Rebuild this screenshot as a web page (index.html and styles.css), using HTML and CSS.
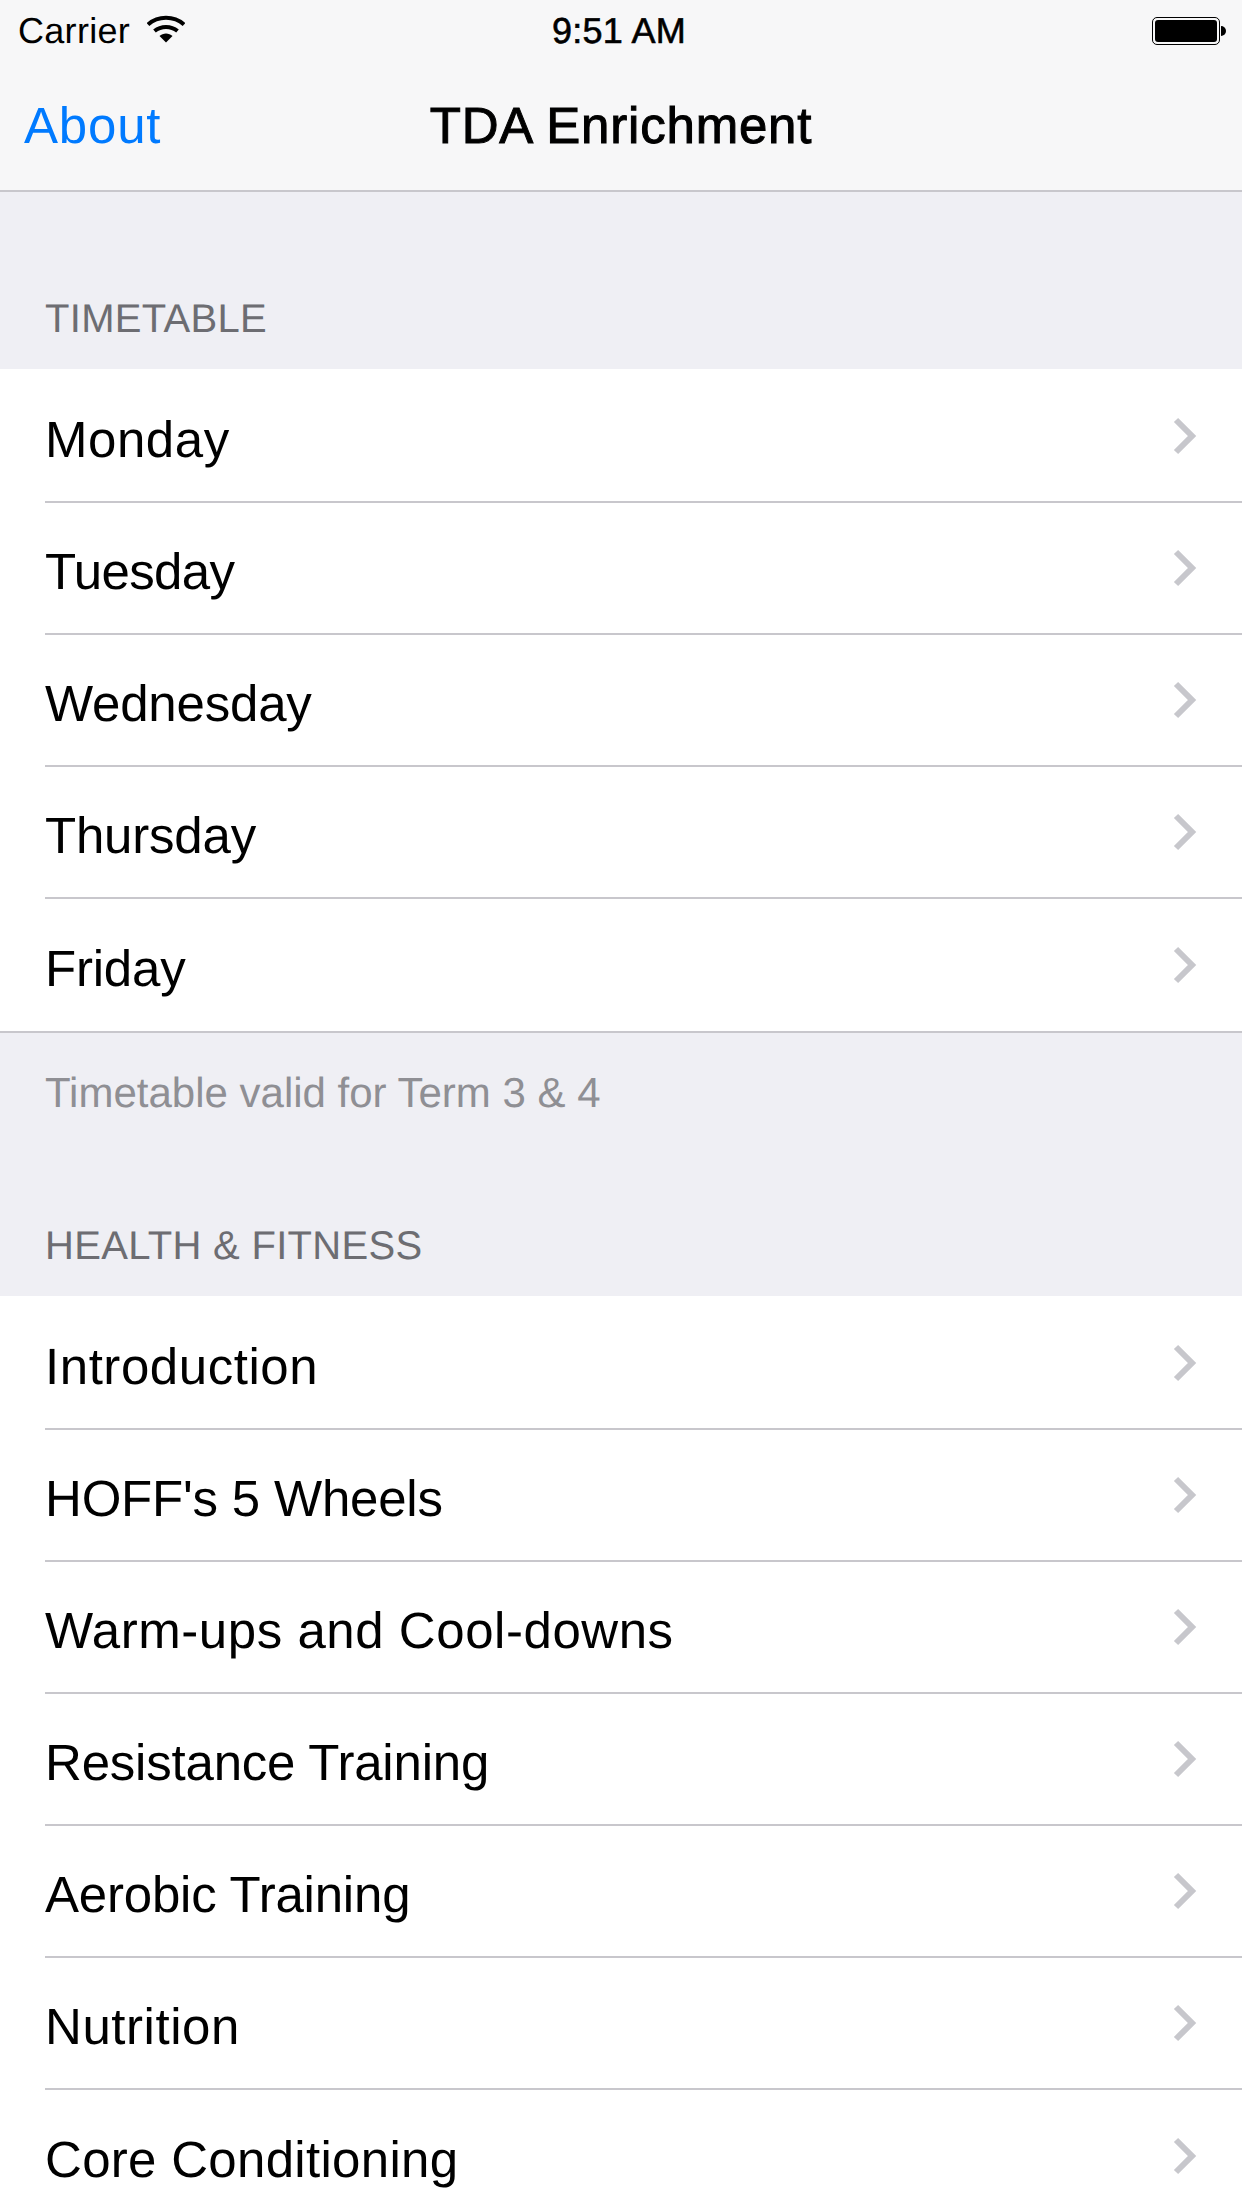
FILE: index.html
```html
<!DOCTYPE html>
<html lang="en">
<head>
    <meta charset="UTF-8">
    <meta name="viewport" content="width=device-width, initial-scale=1.0">
    <title>TDA Enrichment</title>
    <link rel="stylesheet" href="styles.css">
</head>
<body>
    <header class="top-bar">
        <div class="status-bar">
            <div class="status-left">
                <span class="carrier">Carrier</span>
                <svg class="wifi" width="38" height="28" viewBox="0 0 38 28">
                    <path d="M1 9.5C11 0.5 27 0.5 37 9.5" fill="none" stroke="#000" stroke-width="4"/>
                    <path d="M7.5 16C14 10.5 24 10.5 30.5 16" fill="none" stroke="#000" stroke-width="4"/>
                    <path d="M12.5 21C16 17.5 22 17.5 25.5 21L19 27.5Z" fill="#000"/>
                </svg>
            </div>
            <span class="clock">9:51 AM</span>
            <div class="battery">
                <div class="battery-body"><div class="battery-fill"></div></div>
                <div class="battery-tip"></div>
            </div>
        </div>
        <div class="nav-bar">
            <a class="nav-back" href="#">About</a>
            <h1 class="nav-title">TDA Enrichment</h1>
        </div>
    </header>

    <section class="group">
        <h2 class="group-title">TIMETABLE</h2>
        <ul class="rows">
            <li class="row"><span class="row-label wide">Monday</span><svg class="chevron" width="24" height="38" viewBox="0 0 24 38"><path d="M3 3L19 19L3 35" fill="none" stroke="#c7c7cc" stroke-width="6"/></svg></li>
            <li class="row"><span class="row-label tight">Tuesday</span><svg class="chevron" width="24" height="38" viewBox="0 0 24 38"><path d="M3 3L19 19L3 35" fill="none" stroke="#c7c7cc" stroke-width="6"/></svg></li>
            <li class="row"><span class="row-label">Wednesday</span><svg class="chevron" width="24" height="38" viewBox="0 0 24 38"><path d="M3 3L19 19L3 35" fill="none" stroke="#c7c7cc" stroke-width="6"/></svg></li>
            <li class="row"><span class="row-label">Thursday</span><svg class="chevron" width="24" height="38" viewBox="0 0 24 38"><path d="M3 3L19 19L3 35" fill="none" stroke="#c7c7cc" stroke-width="6"/></svg></li>
            <li class="row"><span class="row-label">Friday</span><svg class="chevron" width="24" height="38" viewBox="0 0 24 38"><path d="M3 3L19 19L3 35" fill="none" stroke="#c7c7cc" stroke-width="6"/></svg></li>
        </ul>
        <p class="group-note">Timetable valid for Term 3 &amp; 4</p>
    </section>

    <section class="group">
        <h2 class="group-title">HEALTH &amp; FITNESS</h2>
        <ul class="rows">
            <li class="row"><span class="row-label wide">Introduction</span><svg class="chevron" width="24" height="38" viewBox="0 0 24 38"><path d="M3 3L19 19L3 35" fill="none" stroke="#c7c7cc" stroke-width="6"/></svg></li>
            <li class="row"><span class="row-label">HOFF's 5 Wheels</span><svg class="chevron" width="24" height="38" viewBox="0 0 24 38"><path d="M3 3L19 19L3 35" fill="none" stroke="#c7c7cc" stroke-width="6"/></svg></li>
            <li class="row"><span class="row-label wide">Warm-ups and Cool-downs</span><svg class="chevron" width="24" height="38" viewBox="0 0 24 38"><path d="M3 3L19 19L3 35" fill="none" stroke="#c7c7cc" stroke-width="6"/></svg></li>
            <li class="row"><span class="row-label">Resistance Training</span><svg class="chevron" width="24" height="38" viewBox="0 0 24 38"><path d="M3 3L19 19L3 35" fill="none" stroke="#c7c7cc" stroke-width="6"/></svg></li>
            <li class="row"><span class="row-label">Aerobic Training</span><svg class="chevron" width="24" height="38" viewBox="0 0 24 38"><path d="M3 3L19 19L3 35" fill="none" stroke="#c7c7cc" stroke-width="6"/></svg></li>
            <li class="row"><span class="row-label wide">Nutrition</span><svg class="chevron" width="24" height="38" viewBox="0 0 24 38"><path d="M3 3L19 19L3 35" fill="none" stroke="#c7c7cc" stroke-width="6"/></svg></li>
            <li class="row"><span class="row-label semi-wide">Core Conditioning</span><svg class="chevron" width="24" height="38" viewBox="0 0 24 38"><path d="M3 3L19 19L3 35" fill="none" stroke="#c7c7cc" stroke-width="6"/></svg></li>
        </ul>
    </section>
</body>
</html>
```

FILE: styles.css
```css
html, body {
    height: 2208px;
    overflow: hidden;
}
body {
    font-family: 'Liberation Sans', Arial, sans-serif;
    background-color: #efeff4;
    color: #000;
    margin: 0;
    text-rendering: geometricPrecision;
}
.top-bar {
    background-color: #f7f7f8;
    border-bottom: 2px solid #c8c7cc;
}
.status-bar {
    display: grid;
    grid-template-columns: 1fr auto 1fr;
    align-items: center;
    height: 60px;
    padding: 2px 16px 0 18px;
    box-sizing: border-box;
}
.status-left {
    display: flex;
    align-items: center;
    gap: 17px;
}
.carrier {
    font-size: 36px;
    letter-spacing: 0.3px;
}
.wifi {
    margin-top: -5px;
}
.clock {
    font-size: 36px;
    text-align: center;
    letter-spacing: 0.3px;
    padding-right: 6px;
    -webkit-text-stroke: 0.6px #000;
}
.battery {
    display: flex;
    align-items: center;
    justify-self: end;
}
.battery-body {
    width: 68px;
    height: 28px;
    box-sizing: border-box;
    border: 1px solid #000;
    border-radius: 5px;
    padding: 2px;
}
.battery-fill {
    height: 100%;
    background-color: #000;
    border-radius: 3px;
}
.battery-tip {
    width: 5px;
    height: 10px;
    margin-left: 1px;
    background-color: #000;
    border-radius: 0 5px 5px 0;
}
.nav-bar {
    display: grid;
    grid-template-columns: 1fr auto 1fr;
    align-items: center;
    height: 130px;
    padding: 0 24px;
}
.nav-back {
    color: #007aff;
    font-size: 51px;
    letter-spacing: 0.8px;
    text-decoration: none;
}
.nav-title {
    font-size: 51px;
    font-weight: normal;
    letter-spacing: 0.8px;
    margin: 0;
    -webkit-text-stroke: 1px #000;
}
.group-title {
    font-size: 40px;
    font-weight: normal;
    color: #6d6d72;
    letter-spacing: 0.3px;
    margin: 0;
    padding: 101px 45px 23px;
    line-height: 53px;
}
.rows {
    list-style: none;
    margin: 0;
    padding: 2px 0 0 45px;
    background-color: #fff;
    border-bottom: 2px solid #c8c7cc;
}
.row {
    display: flex;
    justify-content: space-between;
    align-items: center;
    height: 130px;
    padding-right: 45px;
    border-bottom: 2px solid #c8c7cc;
    font-size: 51px;
}
.row:last-child {
    height: 132px;
    border-bottom: none;
}
.row-label {
    padding-top: 6px;
    letter-spacing: -0.2px;
}
.row-label.tight {
    letter-spacing: -0.6px;
}
.row-label.semi-wide {
    letter-spacing: 0.3px;
}
.row-label.wide {
    letter-spacing: 0.55px;
}
.group-note {
    font-size: 42px;
    color: #8f8f94;
    margin: 0;
    padding: 34px 45px 0;
    line-height: 52px;
}
```
